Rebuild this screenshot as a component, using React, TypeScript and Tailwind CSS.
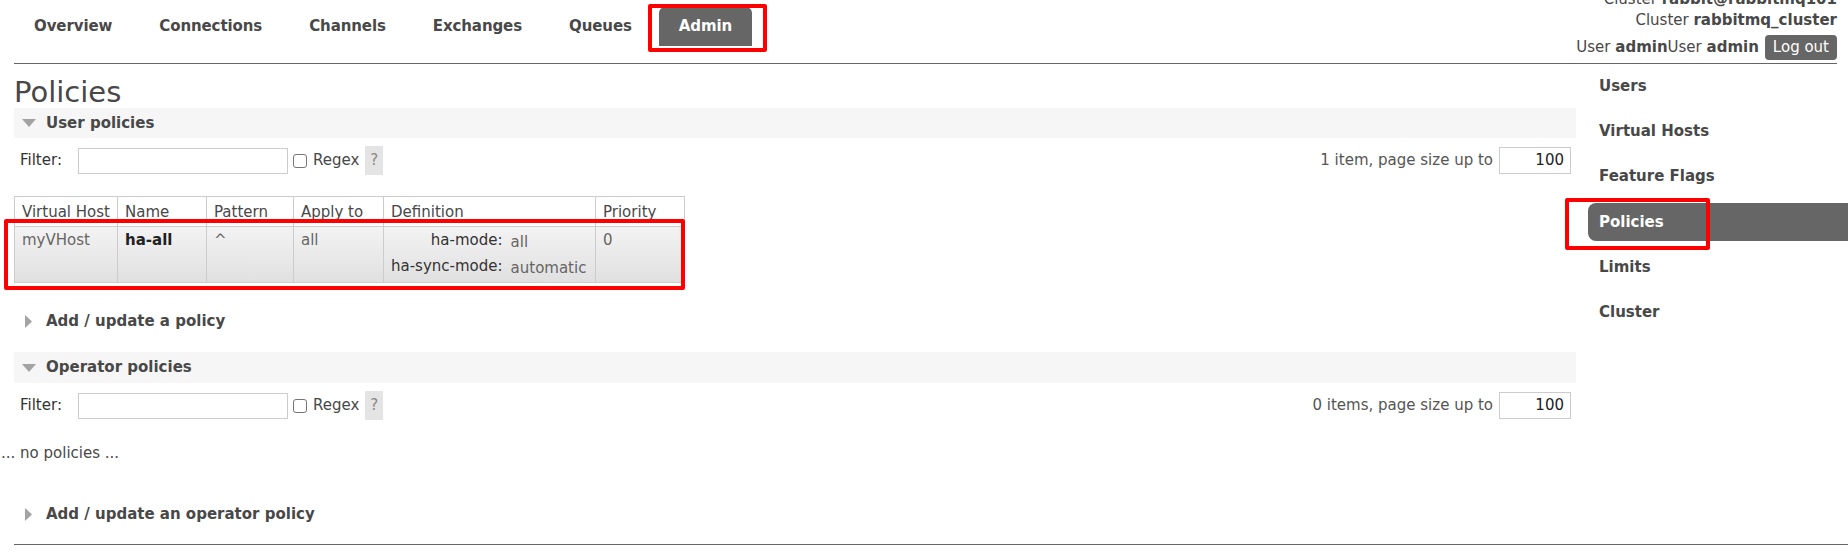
import React from "react";

const TABS = ["Overview", "Connections", "Channels", "Exchanges", "Queues", "Admin"];
const SIDE = ["Users", "Virtual Hosts", "Feature Flags", "Policies", "Limits", "Cluster"];

function DownTri() {
  return (
    <svg width="14" height="8" viewBox="0 0 14 8" className="shrink-0">
      <path d="M0 0 L14 0 L7 8 Z" fill="#a3a3a3" />
    </svg>
  );
}

function RightTri() {
  return (
    <svg width="7" height="13" viewBox="0 0 7 13" className="shrink-0">
      <path d="M0 0 L7 6.5 L0 13 Z" fill="#a3a3a3" />
    </svg>
  );
}

function SectionBar({ title, h }: { title: string; h: string }) {
  return (
    <div className={`flex items-center bg-[#f6f6f6] pl-[8px] ${h}`}>
      <DownTri />
      <span className="ml-[10px] font-bold">{title}</span>
    </div>
  );
}

function FilterRow({ count }: { count: string }) {
  return (
    <div className="flex h-[29px] items-center justify-between pr-[5px]">
      <div className="flex items-center pl-[6px]">
        <span className="text-[#333]">Filter:</span>
        <div className="ml-[16px] h-[26px] w-[210px] border border-[#ccc] bg-white" />
        <span className="ml-[5px] h-[14px] w-[14px] rounded-[3px] border border-[#767676]" />
        <span className="ml-[6px]">Regex</span>
        <span className="ml-[6px] flex h-[29px] w-[18px] items-center justify-center bg-[#e4e4e4] text-[#888]">
          ?
        </span>
      </div>
      <div className="flex items-center">
        <span className="text-[#555]">{count}</span>
        <div className="ml-[6px] flex h-[27px] w-[72px] items-center justify-end border border-[#ccc] bg-white pr-[6px] text-[#222]">
          100
        </div>
      </div>
    </div>
  );
}

function PolicyTable() {
  const th = "h-[30px] border border-[#ccc] px-[7px] pt-[5px] pb-0 text-left font-normal leading-[21px] text-[#484848] align-top whitespace-nowrap";
  const td = "border border-[#ccc] px-[7px] pt-[3px] align-top leading-[21px] whitespace-nowrap";
  return (
    <div className="relative w-[670px]">
      <table className="w-[670px] table-fixed border-collapse">
        <colgroup>
          <col className="w-[103px]" />
          <col className="w-[89px]" />
          <col className="w-[87px]" />
          <col className="w-[90px]" />
          <col className="w-[212px]" />
          <col className="w-[89px]" />
        </colgroup>
        <thead>
          <tr className="bg-white">
            <th className={th}>Virtual Host</th>
            <th className={th}>Name</th>
            <th className={th}>Pattern</th>
            <th className={th}>Apply to</th>
            <th className={th}>Definition</th>
            <th className={th}>Priority</th>
          </tr>
        </thead>
        <tbody>
          <tr className="bg-gradient-to-b from-[#f3f3f3] to-[#e0e0e0]">
            <td className={`${td} text-[#666]`}>myVHost</td>
            <td className={`${td} font-bold text-[#222]`}>ha-all</td>
            <td className={`${td} text-[#666]`}>^</td>
            <td className={`${td} text-[#666]`}>all</td>
            <td className="h-[56px] border border-[#ccc] p-0 align-top">
              <table className="border-collapse whitespace-nowrap">
                <tbody>
                  <tr>
                    <td className="h-[26px] pl-[7px] text-right leading-[26px] text-[#333]">ha-mode:</td>
                    <td className="relative top-[2px] h-[26px] pl-[8px] leading-[26px] text-[#666]">all</td>
                  </tr>
                  <tr>
                    <td className="h-[26px] pl-[7px] text-right leading-[26px] text-[#333]">ha-sync-mode:</td>
                    <td className="relative top-[2px] h-[26px] pl-[8px] leading-[26px] text-[#666]">automatic</td>
                  </tr>
                </tbody>
              </table>
            </td>
            <td className={`${td} text-[#666]`}>0</td>
          </tr>
        </tbody>
      </table>
      <div className="absolute left-[-10px] top-[23px] h-[71px] w-[681px] rounded-[2px] border-4 border-[#ff0000]" />
    </div>
  );
}

function Expander({ label }: { label: string }) {
  return (
    <div className="flex h-[21px] items-center pl-[11px] leading-[21px]">
      <RightTri />
      <span className="ml-[14px] font-bold">{label}</span>
    </div>
  );
}

export default function App() {
  return (
    <div className="h-[557px] w-[1848px] overflow-hidden bg-white font-['DejaVu_Sans',Verdana,sans-serif] text-[15px] leading-[21px] text-[#484848]">
      <header className="ml-[14px] mr-[11px] flex h-[64px] justify-between border-b border-[#666]">
        <nav className="flex items-start gap-[7px] pt-[7px]">
          {TABS.map((t) => {
            const on = t === "Admin";
            return (
              <div
                key={t}
                className={`relative flex h-[39px] items-center rounded-t-md px-5 font-bold tracking-[-0.1px] ${
                  on ? "bg-[#666] text-white" : "text-[#484848]"
                }`}
              >
                {t}
                {on && (
                  <div className="absolute left-[-11px] top-[-3px] h-[48px] w-[119px] rounded-[2px] border-4 border-[#ff0000]" />
                )}
              </div>
            );
          })}
        </nav>
        <div className="-mt-[11px] flex flex-col items-end">
          <div>
            Cluster <b>rabbit@rabbitmq101</b>
          </div>
          <div>
            Cluster <b>rabbitmq_cluster</b>
          </div>
          <div className="mt-[4px] flex h-[25px] items-center">
            <span>
              User <b>admin</b>User <b>admin</b>
            </span>
            <span className="ml-[6px] flex h-[25px] items-center rounded-[4px] bg-[#666] px-[8px] text-white">
              Log out
            </span>
          </div>
        </div>
      </header>

      <div className="flex">
        <main className="ml-[14px] w-[1562px] shrink-0">
          <h1 className="mt-[14px] text-[29px] font-normal leading-[28px] text-[#484848]">Policies</h1>
          <div className="mt-[2px]">
            <SectionBar title="User policies" h="h-[30px]" />
          </div>
          <div className="mt-[8px]">
            <FilterRow count="1 item, page size up to" />
          </div>
          <div className="mt-[21px]">
            <PolicyTable />
          </div>
          <div className="mt-[28px]">
            <Expander label="Add / update a policy" />
          </div>
          <div className="mt-[20px]">
            <SectionBar title="Operator policies" h="h-[31px]" />
          </div>
          <div className="mt-[8px]">
            <FilterRow count="0 items, page size up to" />
          </div>
          <p className="-ml-[13px] mt-[23px]">... no policies ...</p>
          <div className="mt-[40px]">
            <Expander label="Add / update an operator policy" />
          </div>
        </main>

        <aside className="ml-[12px] flex flex-1 flex-col gap-[7.4px] pt-[3px]">
          {SIDE.map((s) => {
            const on = s === "Policies";
            return (
              <div
                key={s}
                className={`relative flex h-[38px] items-center pl-[11px] font-bold ${
                  on ? "rounded-l-[8px] bg-[#666] text-white" : "text-[#484848]"
                }`}
              >
                {s}
                {on && (
                  <div className="absolute left-[-23px] top-[-5px] h-[52px] w-[145px] rounded-[2px] border-4 border-[#ff0000]" />
                )}
              </div>
            );
          })}
        </aside>
      </div>

      <div className="ml-[14px] mt-[19px] border-t border-[#666]" />
    </div>
  );
}
